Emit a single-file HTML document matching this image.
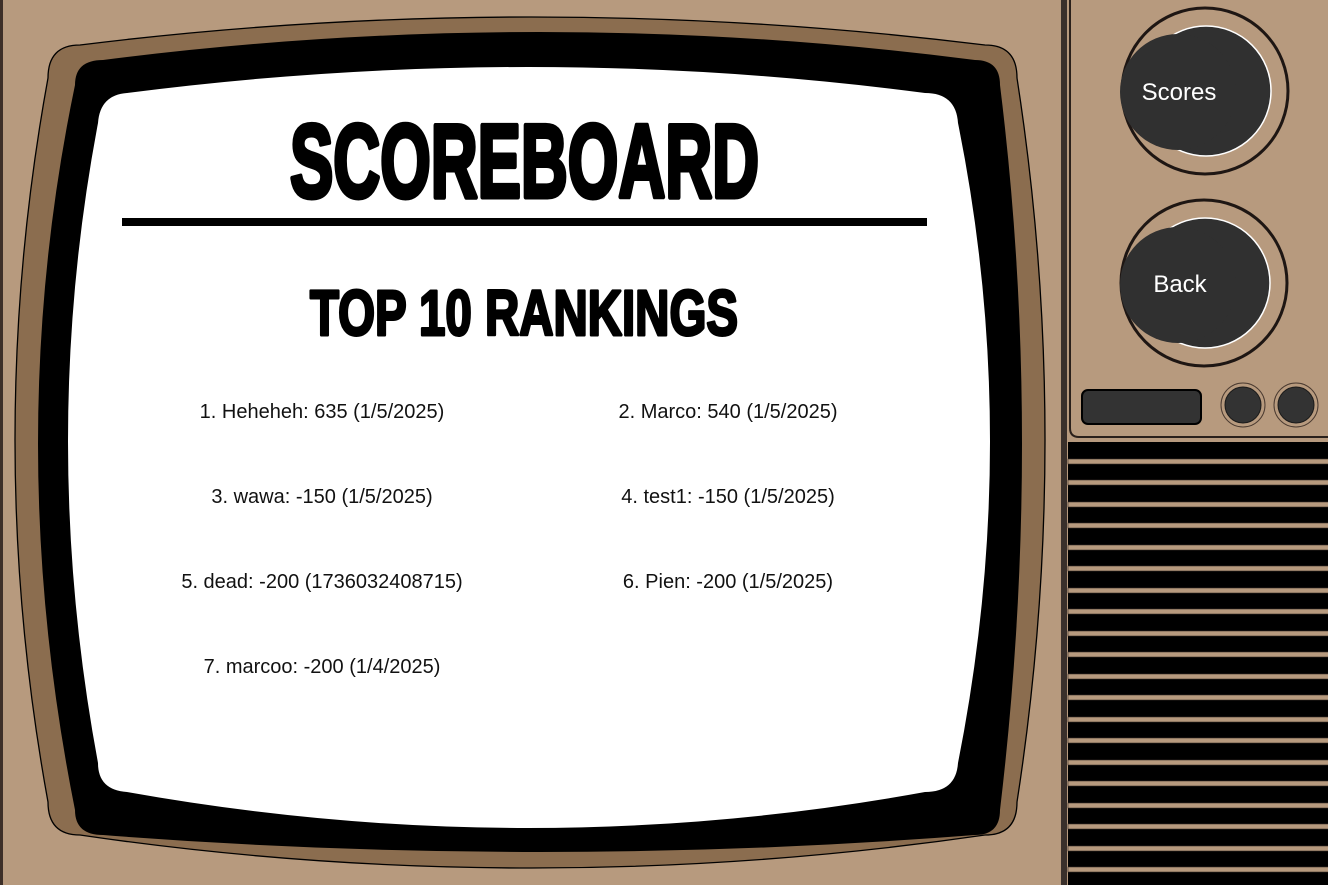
<!DOCTYPE html>
<html><head><style>
html,body{margin:0;padding:0;}
body{width:1328px;height:885px;overflow:hidden;background:#b79a7e;position:relative;font-family:"Liberation Sans",Arial,sans-serif;}
.e{position:absolute;font-size:20px;color:#111;transform:translateX(-50%);white-space:nowrap;}
</style></head><body>
<svg width="1328" height="885" style="position:absolute;left:0;top:0">
<rect x="0" y="0" width="3" height="885" fill="#3d2f28"/>
<path d="M80,45 Q530,-11 985,45 Q1017,45 1017,78 Q1073,440 1017,802 Q1017,835 985,835 Q530,901 80,835 Q48,835 48,802 Q-18,440 48,78 Q48,45 80,45Z" fill="#8b6d4f" stroke="#000" stroke-width="1.3"/>
<path d="M103,60 Q540,4 975,60 Q1000,60 1000,85 Q1044,440 1000,810 Q1000,835 975,835 Q540,869 103,835 Q75,835 75,810 Q1,440 75,85 Q75,60 103,60Z" fill="#000"/>
<path d="M127,93 Q530,41 925,93 Q956,93 958,123 Q1022,440 958,763 Q956,792 925,792 Q530,864 127,792 Q98,790 98,763 Q38,440 98,123 Q100,95 127,93Z" fill="#fff"/>
<rect x="122" y="218" width="805" height="8" fill="#000"/>
<text x="290" y="197" font-family="Liberation Sans" font-weight="bold" font-size="104" stroke="#000" stroke-width="5" stroke-linejoin="round" textLength="469" lengthAdjust="spacingAndGlyphs">SCOREBOARD</text>
<text x="310" y="335" font-family="Liberation Sans" font-weight="bold" font-size="64" stroke="#000" stroke-width="3" stroke-linejoin="round" textLength="428" lengthAdjust="spacingAndGlyphs">TOP 10 RANKINGS</text>
<rect x="1061" y="0" width="6" height="885" fill="#3a302b"/>
<path d="M1070,-2 L1070,428 Q1070,437 1079,437 L1330,437" fill="none" stroke="#2a201b" stroke-width="2"/>
<rect x="1068" y="442" width="260" height="443" fill="#000"/>
<g fill="#b79a7e" stroke="#3a302b" stroke-width="0.6">
<rect x="1068" y="459" width="262" height="5"/><rect x="1068" y="480" width="262" height="5"/><rect x="1068" y="502" width="262" height="5"/><rect x="1068" y="523" width="262" height="5"/><rect x="1068" y="545" width="262" height="5"/><rect x="1068" y="566" width="262" height="5"/><rect x="1068" y="588" width="262" height="5"/><rect x="1068" y="609" width="262" height="5"/><rect x="1068" y="631" width="262" height="5"/><rect x="1068" y="652" width="262" height="5"/><rect x="1068" y="674" width="262" height="5"/><rect x="1068" y="695" width="262" height="5"/><rect x="1068" y="717" width="262" height="5"/><rect x="1068" y="738" width="262" height="5"/><rect x="1068" y="760" width="262" height="5"/><rect x="1068" y="781" width="262" height="5"/><rect x="1068" y="803" width="262" height="5"/><rect x="1068" y="824" width="262" height="5"/><rect x="1068" y="846" width="262" height="5"/><rect x="1068" y="867" width="262" height="5"/>
</g>
<circle cx="1205" cy="91" r="83" fill="none" stroke="#1e1613" stroke-width="3"/>
<circle cx="1206" cy="91" r="65" fill="#303030" stroke="#fff" stroke-width="1.5"/>
<circle cx="1178" cy="92" r="58" fill="#303030"/>
<circle cx="1204" cy="283" r="83" fill="none" stroke="#1e1613" stroke-width="3"/>
<circle cx="1205" cy="283" r="65" fill="#303030" stroke="#fff" stroke-width="1.5"/>
<circle cx="1178" cy="285" r="58" fill="#303030"/>
<text x="1179" y="100" font-family="Liberation Sans" font-size="24" fill="#fff" text-anchor="middle">Scores</text>
<text x="1180" y="292" font-family="Liberation Sans" font-size="24" fill="#fff" text-anchor="middle">Back</text>
<rect x="1082" y="390" width="119" height="34" rx="6" fill="#333" stroke="#000" stroke-width="2"/>
<circle cx="1243" cy="405" r="22" fill="none" stroke="#4a3a30" stroke-width="1"/>
<circle cx="1243" cy="405" r="18" fill="#333" stroke="#1a1a1a" stroke-width="1"/>
<circle cx="1296" cy="405" r="22" fill="none" stroke="#4a3a30" stroke-width="1"/>
<circle cx="1296" cy="405" r="18" fill="#333" stroke="#1a1a1a" stroke-width="1"/>
</svg>
<div class="e" style="left:322px;top:401px">1. Heheheh: 635 (1/5/2025)</div>
<div class="e" style="left:728px;top:401px">2. Marco: 540 (1/5/2025)</div>
<div class="e" style="left:322px;top:486px">3. wawa: -150 (1/5/2025)</div>
<div class="e" style="left:728px;top:486px">4. test1: -150 (1/5/2025)</div>
<div class="e" style="left:322px;top:571px">5. dead: -200 (1736032408715)</div>
<div class="e" style="left:728px;top:571px">6. Pien: -200 (1/5/2025)</div>
<div class="e" style="left:322px;top:656px">7. marcoo: -200 (1/4/2025)</div>
</body></html>
